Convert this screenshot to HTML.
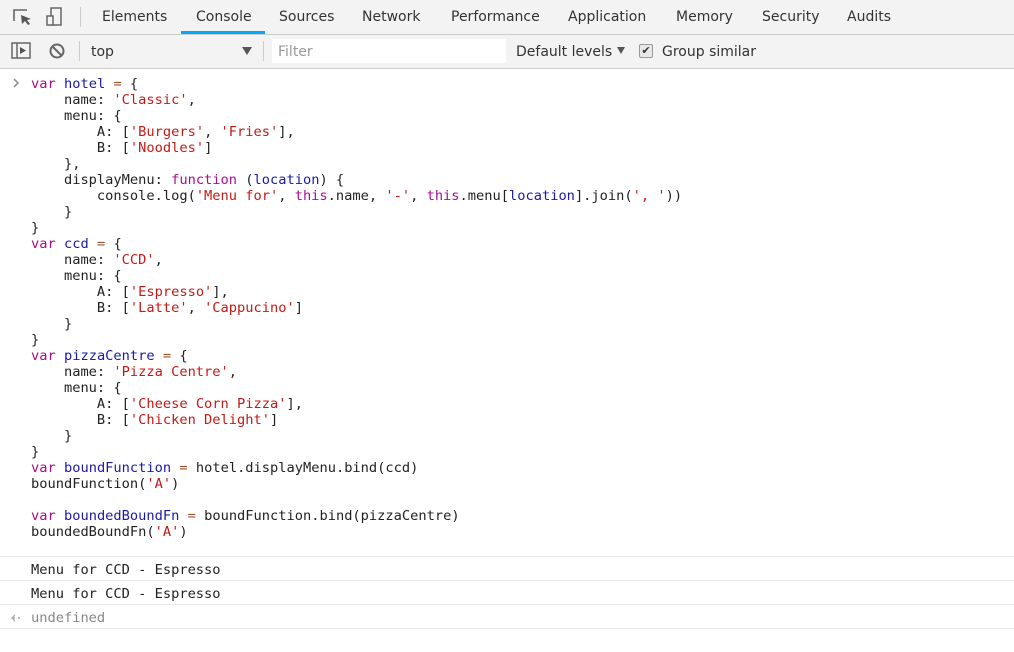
<!DOCTYPE html>
<html><head><style>
body{margin:0;width:1014px;height:637px;overflow:hidden;background:#fff;font-family:"DejaVu Sans","Liberation Sans",sans-serif;}
.tb1{position:absolute;left:0;top:0;width:1014px;height:34px;background:#f3f3f3;border-bottom:1px solid #ccc;}
.tb2{position:absolute;left:0;top:35px;width:1014px;height:33px;background:#f3f3f3;border-bottom:1px solid #ccc;}
.t{position:absolute;top:9px;font-size:14px;color:#333;}
.sep{position:absolute;width:1px;background:#ccc;}
.code{position:absolute;left:31px;top:76px;font-family:"DejaVu Sans Mono","Liberation Mono",monospace;font-size:13.7px;line-height:16px;color:#222;white-space:pre;}
.k{color:#aa0d91}.v{color:#1a1aa6}.s{color:#c41a16}.o{color:#a0522d}
.row{position:absolute;left:0;width:1014px;border-top:1px solid #e8e8e8;height:23px;font-family:"DejaVu Sans Mono","Liberation Mono",monospace;font-size:13.7px;color:#222;}
.row span{position:absolute;left:31px;top:5px;}
</style></head><body>
<div class="tb1">
<svg style="position:absolute;left:12px;top:7px" width="22" height="20" viewBox="0 0 22 20"><path d="M2 14V3h13" fill="none" stroke="#666" stroke-width="1.6"/><path d="M9 8l10 4-4 1 3 4-2 1-3-4-3 3z" fill="#555"/></svg>
<svg style="position:absolute;left:45px;top:6px" width="22" height="22" viewBox="0 0 22 22"><rect x="6" y="2" width="10" height="17" fill="none" stroke="#666" stroke-width="1.5"/><rect x="2" y="10" width="6" height="9" fill="#f3f3f3" stroke="#666" stroke-width="1.5"/></svg>
<div class="sep" style="left:80px;top:7px;height:20px"></div>
<div class="t" style="left:102px">Elements</div>
<div class="t" style="left:196px">Console</div>
<div style="position:absolute;left:181px;top:31px;width:84px;height:3px;background:#03a9f4"></div>
<div class="t" style="left:279px">Sources</div>
<div class="t" style="left:362px">Network</div>
<div class="t" style="left:451px">Performance</div>
<div class="t" style="left:568px">Application</div>
<div class="t" style="left:676px">Memory</div>
<div class="t" style="left:762px">Security</div>
<div class="t" style="left:847px">Audits</div>
</div>
<div class="tb2">
<svg style="position:absolute;left:11px;top:7px" width="20" height="18" viewBox="0 0 20 18"><rect x="1" y="1" width="18" height="15" fill="none" stroke="#666" stroke-width="1.5"/><line x1="6" y1="1" x2="6" y2="16" stroke="#666" stroke-width="1.5"/><path d="M9 5l6 3.5-6 3.5z" fill="#555"/></svg>
<svg style="position:absolute;left:48px;top:7px" width="18" height="18" viewBox="0 0 18 18"><circle cx="9" cy="9" r="6.5" fill="none" stroke="#666" stroke-width="2"/><line x1="4.5" y1="4.5" x2="13.5" y2="13.5" stroke="#666" stroke-width="2"/></svg>
<div class="sep" style="left:79px;top:6px;height:20px"></div>
<div class="t" style="left:91px;top:9px">top</div>
<div style="position:absolute;left:242px;top:12px;width:0;height:0;border-left:5px solid transparent;border-right:5px solid transparent;border-top:8px solid #555"></div>
<div class="sep" style="left:263px;top:6px;height:20px"></div>
<div style="position:absolute;left:272px;top:4px;width:234px;height:24px;background:#fff"></div>
<div class="t" style="left:278px;top:9px;color:#999">Filter</div>
<div class="t" style="left:516px;top:9px">Default levels</div>
<div style="position:absolute;left:617px;top:12px;width:0;height:0;border-left:4px solid transparent;border-right:4px solid transparent;border-top:7px solid #555"></div>
<div style="position:absolute;left:639px;top:9px;width:12px;height:12px;border:1px solid #999;border-radius:2px;background:#e8e8e8;font-size:11px;line-height:12px;text-align:center;color:#333">✔</div>
<div class="t" style="left:662px;top:9px">Group similar</div>
</div>
<svg style="position:absolute;left:12px;top:78px" width="8" height="10"><path d="M2 1l4 4-4 4" fill="none" stroke="#888" stroke-width="1.5"/></svg>
<div class="code"><span class="k">var</span> <span class="v">hotel</span> <span class="o">=</span> {
    name: <span class="s">'Classic'</span>,
    menu: {
        A: [<span class="s">'Burgers'</span>, <span class="s">'Fries'</span>],
        B: [<span class="s">'Noodles'</span>]
    },
    displayMenu: <span class="k">function</span> (<span class="v">location</span>) {
        console.log(<span class="s">'Menu for'</span>, <span class="k">this</span>.name, <span class="s">'-'</span>, <span class="k">this</span>.menu[<span class="v">location</span>].join(<span class="s">', '</span>))
    }
}
<span class="k">var</span> <span class="v">ccd</span> <span class="o">=</span> {
    name: <span class="s">'CCD'</span>,
    menu: {
        A: [<span class="s">'Espresso'</span>],
        B: [<span class="s">'Latte'</span>, <span class="s">'Cappucino'</span>]
    }
}
<span class="k">var</span> <span class="v">pizzaCentre</span> <span class="o">=</span> {
    name: <span class="s">'Pizza Centre'</span>,
    menu: {
        A: [<span class="s">'Cheese Corn Pizza'</span>],
        B: [<span class="s">'Chicken Delight'</span>]
    }
}
<span class="k">var</span> <span class="v">boundFunction</span> <span class="o">=</span> hotel.displayMenu.bind(ccd)
boundFunction(<span class="s">'A'</span>)

<span class="k">var</span> <span class="v">boundedBoundFn</span> <span class="o">=</span> boundFunction.bind(pizzaCentre)
boundedBoundFn(<span class="s">'A'</span>)</div>
<div class="row" style="top:556px"><span>Menu for CCD - Espresso</span></div>
<div class="row" style="top:580px"><span>Menu for CCD - Espresso</span></div>
<div class="row" style="top:604px;color:#888"><svg style="position:absolute;left:10px;top:9px" width="12" height="8"><path d="M5 1L2 4l3 3M2 4h3" fill="none" stroke="#aaa" stroke-width="1.3"/><circle cx="9" cy="4" r="1" fill="#aaa"/></svg><span>undefined</span></div>
<div class="row" style="top:628px"></div>
</body></html>
